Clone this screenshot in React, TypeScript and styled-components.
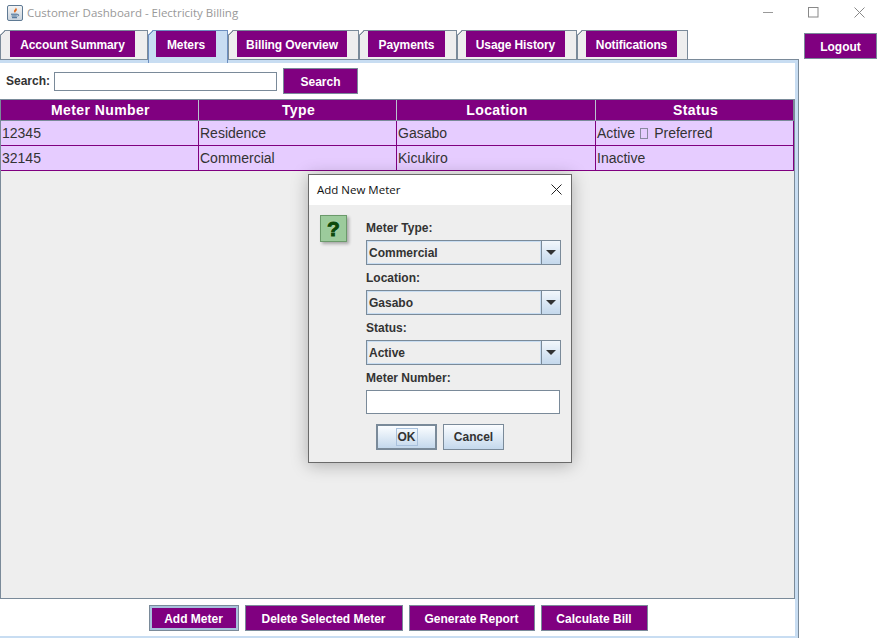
import React from "react";
import styled, { createGlobalStyle } from "styled-components";

const Global = createGlobalStyle`
  html, body { margin: 0; padding: 0; background: #fff; }
  #root { width: 881px; height: 638px; }
  * { box-sizing: border-box; }
`;

const Frame = styled.div`
  position: relative;
  width: 881px;
  height: 638px;
  overflow: hidden;
  display: flex;
  flex-direction: column;
  background: #fff;
  font-family: "Liberation Sans", Arial, sans-serif;
`;

const TitleBar = styled.div`
  height: 30px;
  display: flex;
  align-items: center;
  padding: 0 0 5px 7px;
`;

const TitleText = styled.span`
  margin-left: 4px;
  font: 11.5px "Open Sans", sans-serif;
  color: #999;
`;

const WindowControls = styled.div`
  margin-left: auto;
  display: flex;
  align-items: center;
  gap: 35px;
  padding-right: 16px;
  margin-top: -1px;
`;

const Body = styled.div`
  flex: 1;
  display: flex;
  min-height: 0;
`;

const LeftColumn = styled.div`
  width: 799px;
  display: flex;
  flex-direction: column;
`;

const TabStrip = styled.div`
  height: 29px;
  display: flex;
  align-items: flex-start;
  position: relative;
  z-index: 1;
`;

const Tab = styled.div<{ $active?: boolean; $w: number; $pad: number }>`
  position: relative;
  width: ${(p) => p.$w}px;
  height: ${(p) => (p.$active ? 33 : 29)}px;
  padding: 0 0 0 ${(p) => p.$pad}px;
  background: ${(p) => (p.$active ? "#c8ddf2" : "#eeeeee")};
  border: 1px solid ${(p) => (p.$active ? "#6c8ebf" : "#7a8a99")};
  border-bottom: none;
  clip-path: polygon(5px 0, 100% 0, 100% 100%, 0 100%, 0 5px);
  &::before {
    content: "";
    position: absolute;
    left: -1px;
    top: -1px;
    width: 7px;
    height: 7px;
    background: linear-gradient(
      135deg,
      transparent 3.4px,
      ${(p) => (p.$active ? "#6c8ebf" : "#7a8a99")} 3.4px,
      ${(p) => (p.$active ? "#6c8ebf" : "#7a8a99")} 4.6px,
      transparent 4.6px
    );
  }
`;

const TabLabel = styled.div<{ $w: number }>`
  width: ${(p) => p.$w}px;
  height: 26px;
  padding-top: 1px;
  background: #800080;
  color: #fff;
  font-weight: 700;
  font-size: 12px;
  letter-spacing: -0.1px;
  display: flex;
  align-items: center;
  justify-content: center;
`;

const Panel = styled.div`
  flex: 1;
  display: flex;
  flex-direction: column;
  border: 1px solid #7a8a99;
  border-left: none;
  border-bottom: none;
  box-shadow: inset -3px 0 0 #c8ddf2, inset 0 3px 0 #c8ddf2, inset 0 -6px 0 -4px #c8ddf2;
  padding: 3px 3px 7px 0;
  background: #fff;
`;

const SearchRow = styled.div`
  height: 36px;
  display: flex;
  align-items: center;
  padding: 0 0 0 6px;
  flex: none;
`;

const SearchLabel = styled.span`
  font-size: 12px;
  font-weight: 700;
  color: #333;
  margin-right: 4px;
`;

const SearchInput = styled.div`
  width: 223px;
  height: 19px;
  background: #fff;
  border: 1px solid #7a8a99;
  margin-right: 6px;
`;

const PurpleButton = styled.div<{ $w: number; $focus?: boolean }>`
  width: ${(p) => p.$w}px;
  height: 26px;
  padding-top: 1px;
  background: #800080;
  color: #fff;
  font-weight: 700;
  font-size: 12px;
  border: 1px solid #7a8a99;
  display: flex;
  align-items: center;
  justify-content: center;
  flex: none;
  ${(p) => p.$focus && "box-shadow: inset 0 0 0 2px #a9c1dc;"}
`;

const TableArea = styled.div`
  flex: 1;
  min-height: 0;
  background: #eeeeee;
  border: 1px solid #7a8a99;
  display: flex;
  flex-direction: column;
`;

const HeaderRow = styled.div`
  display: grid;
  grid-template-columns: 198px 198px 199px 198px;
  height: 21px;
  width: 793px;
`;

const HeaderCell = styled.div`
  background: #800080;
  color: #fff;
  font-weight: 700;
  font-size: 14px;
  letter-spacing: 0.4px;
  padding-left: 2px;
  display: flex;
  align-items: center;
  justify-content: center;
  border-right: 1px solid #b9c3cd;
  border-bottom: 1px solid #7a8a99;
  &:last-child { border-right: 1px solid #7a8a99; }
`;

const DataRow = styled.div`
  display: grid;
  grid-template-columns: 198px 198px 199px 198px;
  height: 25px;
  width: 793px;
`;

const DataCell = styled.div`
  background: #e6ccff;
  color: #333;
  font-size: 14px;
  padding: 0 0 0 1px;
  display: flex;
  align-items: center;
  white-space: pre;
  border-right: 1px solid #800080;
  border-bottom: 1px solid #800080;
`;

const Tofu = styled.span`
  display: inline-block;
  width: 8px;
  height: 11px;
  margin: 0 6px 0 5px;
  border: 1px solid #8a8aa0;
`;

const ActionBar = styled.div`
  height: 32px;
  flex: none;
  display: flex;
  justify-content: center;
  align-items: flex-end;
  gap: 6px;
  padding-left: 1px;
`;

const LogoutColumn = styled.div`
  flex: 1;
  padding: 3px 0 0 5px;
`;

const Dialog = styled.div`
  position: absolute;
  left: 308px;
  top: 174px;
  width: 264px;
  height: 289px;
  background: #eeeeee;
  border: 1px solid #6a6a6a;
  box-shadow: 0 2px 16px rgba(0, 0, 0, 0.28);
  display: flex;
  flex-direction: column;
  z-index: 5;
`;

const DialogTitle = styled.div`
  height: 30px;
  background: #fff;
  display: flex;
  align-items: center;
  justify-content: space-between;
  padding: 0 9px 2px 8px;
  font: 11.5px "Open Sans", sans-serif;
  color: #111;
`;

const DialogBody = styled.div`
  flex: 1;
  display: flex;
  padding: 10px 0 0 11px;
`;

const IconColumn = styled.div`
  width: 46px;
  flex: none;
`;

const QuestionIcon = styled.div`
  width: 27px;
  height: 27px;
  background: #9ccb9c;
  border: 1px solid #6b9a6b;
  box-shadow: 2px 2px 3px rgba(0, 0, 0, 0.3);
  color: #0b4a0b;
  font: 700 21px "Liberation Sans", sans-serif;
  display: flex;
  align-items: center;
  justify-content: center;
  -webkit-text-stroke: 1px #0b4a0b;
  text-shadow: 0 0 2px #e4f7e4;
`;

const FormColumn = styled.div`
  width: 195px;
  display: flex;
  flex-direction: column;
`;

const FieldLabel = styled.div`
  height: 25px;
  font-size: 12px;
  font-weight: 700;
  color: #333;
  display: flex;
  align-items: center;
  padding-top: 1px;
`;

const Combo = styled.div`
  height: 25px;
  display: flex;
  border: 1px solid #7a8a99;
  background: #eeeeee;
`;

const ComboValue = styled.div`
  flex: 1;
  font-size: 12px;
  font-weight: 700;
  color: #333;
  display: flex;
  align-items: center;
  padding-left: 1px;
  border: 1px solid #c8ddf2;
`;

const ComboArrow = styled.div`
  width: 19px;
  border-left: 1px solid #7a8a99;
  background: linear-gradient(#f2f7fc, #c4d8ec);
  display: flex;
  align-items: center;
  justify-content: center;
  &::after {
    content: "";
    border-left: 5px solid transparent;
    border-right: 5px solid transparent;
    border-top: 5px solid #333;
  }
`;

const NumberInput = styled.div`
  width: 194px;
  height: 24px;
  background: #fff;
  border: 1px solid #7a8a99;
`;

const DialogButtons = styled.div`
  display: flex;
  gap: 6px;
  padding: 10px 0 0 10px;
`;

const DialogButton = styled.div<{ $default?: boolean; $w: number }>`
  width: ${(p) => p.$w}px;
  height: 26px;
  background: linear-gradient(#fbfdff, #c4d8ec);
  border: ${(p) => (p.$default ? "2px" : "1px")} solid #7a8a99;
  font-size: 12px;
  font-weight: 700;
  color: #333;
  display: flex;
  align-items: center;
  justify-content: center;
`;

const FocusText = styled.span`
  outline: 1px solid #a9c1dc;
  line-height: 16px;
  padding: 0 1px;
`;

const JavaIcon = () => (
  <svg width="16" height="16" viewBox="0 0 16 16">
    <defs>
      <linearGradient id="jbg" x1="0" y1="0" x2="0" y2="1">
        <stop offset="0" stopColor="#f6f6f6" />
        <stop offset="1" stopColor="#c9d2dc" />
      </linearGradient>
    </defs>
    <rect x="0.5" y="0.5" width="15" height="15" rx="1.5" fill="url(#jbg)" stroke="#5f7a94" />
    <path d="M8.5 2.5C9.5 4 6.5 5 7 6.5c.2.6.8 1.2 1 1.5C8 6.8 10.5 5.5 9.8 4.3 10 4 9.2 3 8.5 2.5z" fill="#e0651a" />
    <path d="M4 9.2h6.5M4.6 11h5.2M5 12.7h5M10.5 9.5c1.5-.3 1.8 1.3 0 1.6" fill="none" stroke="#3d6690" strokeWidth="1" />
  </svg>
);

const tabs = [
  { label: "Account Summary", w: 148, pad: 9, bw: 125 },
  { label: "Meters", w: 80, pad: 7, bw: 60, active: true },
  { label: "Billing Overview", w: 131, pad: 8, bw: 110 },
  { label: "Payments", w: 98, pad: 8, bw: 77 },
  { label: "Usage History", w: 120, pad: 8, bw: 99 },
  { label: "Notifications", w: 111, pad: 8, bw: 91 },
];

const rows: [string, string, string, React.ReactNode][] = [
  ["12345", "Residence", "Gasabo", <>Active<Tofu />Preferred</>],
  ["32145", "Commercial", "Kicukiro", "Inactive"],
];

export default function App() {
  return (
    <Frame>
      <Global />
      <TitleBar>
        <JavaIcon />
        <TitleText>Customer Dashboard - Electricity Billing</TitleText>
        <WindowControls>
          <svg width="11" height="11" viewBox="0 0 11 11"><path d="M1 5.5h10" stroke="#999" /></svg>
          <svg width="11" height="11" viewBox="0 0 11 11"><rect x=".5" y=".5" width="9.5" height="9.5" fill="none" stroke="#888" /></svg>
          <svg width="11" height="11" viewBox="0 0 11 11"><path d="M.5.5l10 10M10.5.5l-10 10" stroke="#888" /></svg>
        </WindowControls>
      </TitleBar>
      <Body>
        <LeftColumn>
          <TabStrip>
            {tabs.map((t) => (
              <Tab key={t.label} $active={t.active} $w={t.w} $pad={t.pad}>
                <TabLabel $w={t.bw}>{t.label}</TabLabel>
              </Tab>
            ))}
          </TabStrip>
          <Panel>
            <SearchRow>
              <SearchLabel>Search:</SearchLabel>
              <SearchInput />
              <PurpleButton $w={75}>Search</PurpleButton>
            </SearchRow>
            <TableArea>
              <HeaderRow>
                {["Meter Number", "Type", "Location", "Status"].map((h) => (
                  <HeaderCell key={h}>{h}</HeaderCell>
                ))}
              </HeaderRow>
              {rows.map((r) => (
                <DataRow key={r[0]}>
                  {r.map((c, i) => (
                    <DataCell key={i}>{c}</DataCell>
                  ))}
                </DataRow>
              ))}
            </TableArea>
            <ActionBar>
              <PurpleButton $w={90} $focus>Add Meter</PurpleButton>
              <PurpleButton $w={158}>Delete Selected Meter</PurpleButton>
              <PurpleButton $w={126}>Generate Report</PurpleButton>
              <PurpleButton $w={107}>Calculate Bill</PurpleButton>
            </ActionBar>
          </Panel>
        </LeftColumn>
        <LogoutColumn>
          <PurpleButton $w={73}>Logout</PurpleButton>
        </LogoutColumn>
      </Body>
      <Dialog>
        <DialogTitle>
          Add New Meter
          <svg width="11" height="11" viewBox="0 0 11 11"><path d="M.5.5l10 10M10.5.5l-10 10" stroke="#222" /></svg>
        </DialogTitle>
        <DialogBody>
          <IconColumn>
            <QuestionIcon>?</QuestionIcon>
          </IconColumn>
          <FormColumn>
            <FieldLabel>Meter Type:</FieldLabel>
            <Combo><ComboValue>Commercial</ComboValue><ComboArrow /></Combo>
            <FieldLabel>Location:</FieldLabel>
            <Combo><ComboValue>Gasabo</ComboValue><ComboArrow /></Combo>
            <FieldLabel>Status:</FieldLabel>
            <Combo><ComboValue>Active</ComboValue><ComboArrow /></Combo>
            <FieldLabel>Meter Number:</FieldLabel>
            <NumberInput />
            <DialogButtons>
              <DialogButton $default $w={61}><FocusText>OK</FocusText></DialogButton>
              <DialogButton $w={61}>Cancel</DialogButton>
            </DialogButtons>
          </FormColumn>
        </DialogBody>
      </Dialog>
    </Frame>
  );
}
